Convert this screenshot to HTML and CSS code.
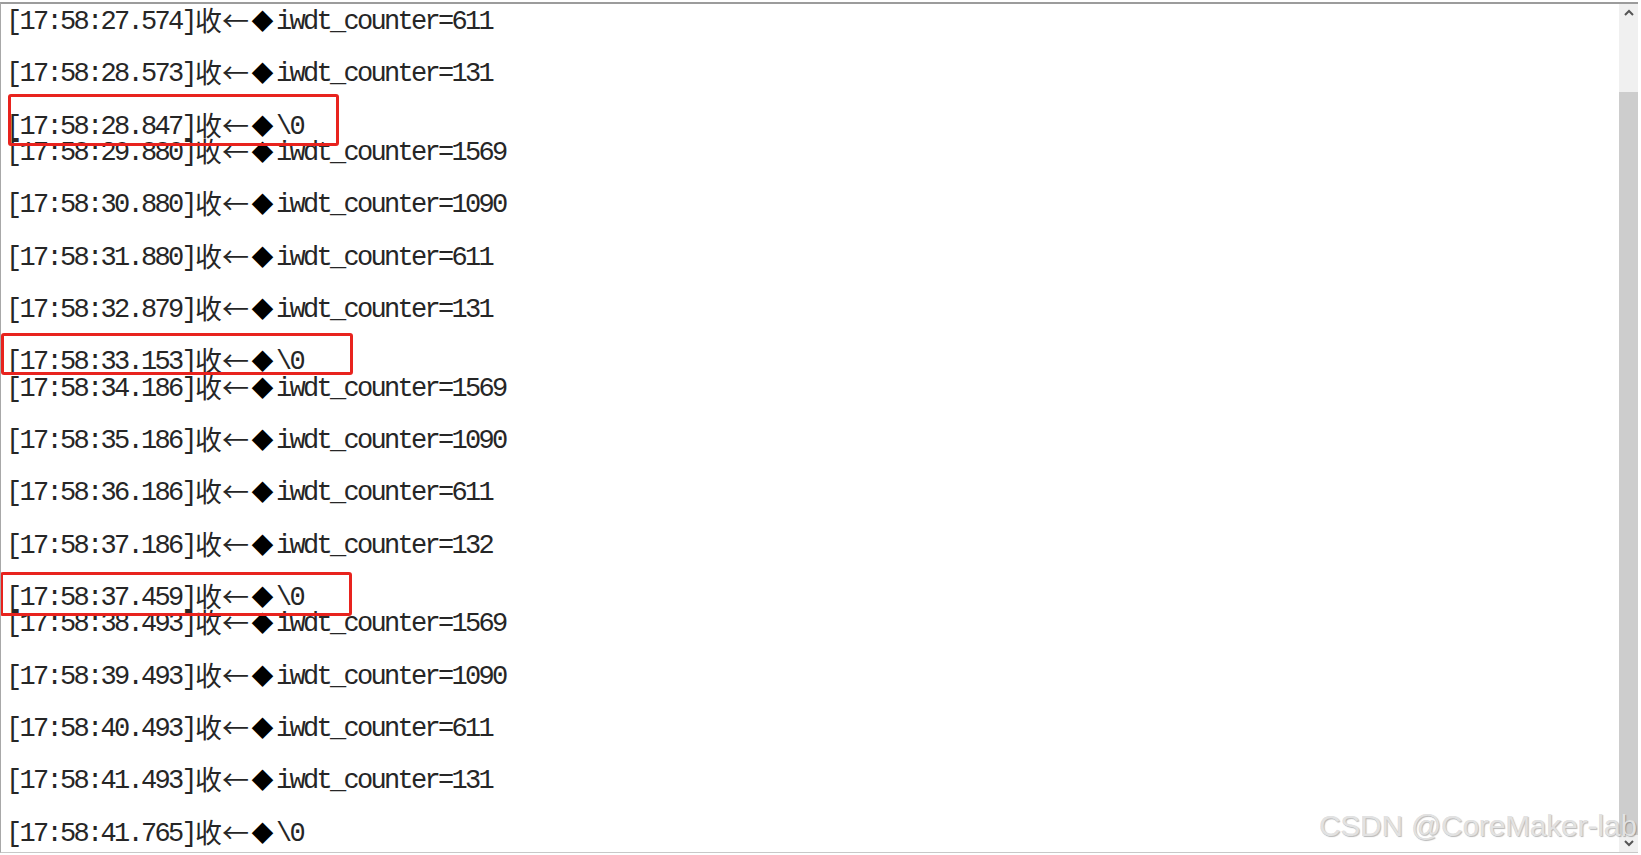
FILE: index.html
```html
<!DOCTYPE html>
<html lang="zh-CN">
<head>
<meta charset="utf-8">
<title>串口日志</title>
<link rel="stylesheet" href="styles.css">
</head>
<body>
<div class="window">
  <div class="log">
    <div class="row gap"><span class="m">[17:58:27.574]</span><span class="c">收←</span><span class="c d">◆</span><span class="m">iwdt_counter=611</span></div>
    <div class="row gap"><span class="m">[17:58:28.573]</span><span class="c">收←</span><span class="c d">◆</span><span class="m">iwdt_counter=131</span></div>
    <div class="row"><span class="m">[17:58:28.847]</span><span class="c">收←</span><span class="c d">◆</span><span class="m">\0</span></div>
    <div class="row gap"><span class="m">[17:58:29.880]</span><span class="c">收←</span><span class="c d">◆</span><span class="m">iwdt_counter=1569</span></div>
    <div class="row gap"><span class="m">[17:58:30.880]</span><span class="c">收←</span><span class="c d">◆</span><span class="m">iwdt_counter=1090</span></div>
    <div class="row gap"><span class="m">[17:58:31.880]</span><span class="c">收←</span><span class="c d">◆</span><span class="m">iwdt_counter=611</span></div>
    <div class="row gap"><span class="m">[17:58:32.879]</span><span class="c">收←</span><span class="c d">◆</span><span class="m">iwdt_counter=131</span></div>
    <div class="row"><span class="m">[17:58:33.153]</span><span class="c">收←</span><span class="c d">◆</span><span class="m">\0</span></div>
    <div class="row gap"><span class="m">[17:58:34.186]</span><span class="c">收←</span><span class="c d">◆</span><span class="m">iwdt_counter=1569</span></div>
    <div class="row gap"><span class="m">[17:58:35.186]</span><span class="c">收←</span><span class="c d">◆</span><span class="m">iwdt_counter=1090</span></div>
    <div class="row gap"><span class="m">[17:58:36.186]</span><span class="c">收←</span><span class="c d">◆</span><span class="m">iwdt_counter=611</span></div>
    <div class="row gap"><span class="m">[17:58:37.186]</span><span class="c">收←</span><span class="c d">◆</span><span class="m">iwdt_counter=132</span></div>
    <div class="row"><span class="m">[17:58:37.459]</span><span class="c">收←</span><span class="c d">◆</span><span class="m">\0</span></div>
    <div class="row gap"><span class="m">[17:58:38.493]</span><span class="c">收←</span><span class="c d">◆</span><span class="m">iwdt_counter=1569</span></div>
    <div class="row gap"><span class="m">[17:58:39.493]</span><span class="c">收←</span><span class="c d">◆</span><span class="m">iwdt_counter=1090</span></div>
    <div class="row gap"><span class="m">[17:58:40.493]</span><span class="c">收←</span><span class="c d">◆</span><span class="m">iwdt_counter=611</span></div>
    <div class="row gap"><span class="m">[17:58:41.493]</span><span class="c">收←</span><span class="c d">◆</span><span class="m">iwdt_counter=131</span></div>
    <div class="row"><span class="m">[17:58:41.765]</span><span class="c">收←</span><span class="c d">◆</span><span class="m">\0</span></div>
  </div>
  <div class="scrollbar">
    <div class="arrow">
      <svg width="10" height="7" viewBox="0 0 10 7"><polyline points="1,6 5,2 9,6" fill="none" stroke="#555" stroke-width="2"/></svg>
    </div>
    <div class="track"><div class="thumb"></div></div>
    <div class="arrow">
      <svg width="10" height="7" viewBox="0 0 10 7"><polyline points="1,1 5,5 9,1" fill="none" stroke="#555" stroke-width="2"/></svg>
    </div>
  </div>
  <div class="mark mark1"></div>
  <div class="mark mark2"></div>
  <div class="mark mark3"></div>
  <div class="watermark">CSDN @CoreMaker-lab</div>
</div>
</body>
</html>
```
FILE: styles.css
```css
html, body {
  margin: 0;
  padding: 0;
  background: #ffffff;
}

.window {
  position: relative;
  margin-top: 2px;
  width: 1637px;
  height: 848px;
  border-top: 2px solid #9c9c9c;
  border-left: 1px solid #a8a8a8;
  border-bottom: 1px solid #c8c8c8;
  display: flex;
  background: #ffffff;
  overflow: hidden;
}

.log {
  flex: 1;
  padding: 5px 0 0 5px;
  color: #262626;
}

.row {
  height: 26.2px;
  line-height: 26.2px;
  font-family: "Liberation Mono", monospace;
  font-size: 27px;
  white-space: pre;
}

.row.gap {
  margin-bottom: 26.2px;
}

.m {
  letter-spacing: -2.7px;
}

.c {
  font-family: "Noto Sans CJK SC", sans-serif;
  font-size: 27px;
  line-height: 0;
  vertical-align: -2px;
}

.c.d {
  font-size: 22px;
  padding: 0 2.5px;
  color: #000000;
  vertical-align: 0;
}

.scrollbar {
  width: 19px;
  display: flex;
  flex-direction: column;
  background: #f0f0f0;
}

.arrow {
  height: 17px;
  display: flex;
  align-items: center;
  justify-content: center;
}

.track {
  flex: 1;
  display: flex;
  flex-direction: column;
  justify-content: flex-end;
}

.thumb {
  height: 743px;
  background: #cdcdcd;
}

.mark {
  position: absolute;
  border: 3.5px solid #e8231e;
  border-radius: 3px;
  box-sizing: border-box;
}

.mark1 {
  left: 7px;
  top: 90px;
  width: 331px;
  height: 52px;
}

.mark2 {
  left: 0px;
  top: 329px;
  width: 352px;
  height: 42px;
}

.mark3 {
  left: -1px;
  top: 568px;
  width: 352px;
  height: 44px;
}

.watermark {
  position: absolute;
  right: 1px;
  top: 807px;
  font-family: "Liberation Sans", Arial, sans-serif;
  font-size: 29.6px;
  line-height: 29px;
  color: #e2e2e2;
  text-shadow: 1px 1px 1px rgba(0, 0, 0, 0.28), -0.5px -0.5px 0 rgba(0, 0, 0, 0.12);
  white-space: nowrap;
}
```
